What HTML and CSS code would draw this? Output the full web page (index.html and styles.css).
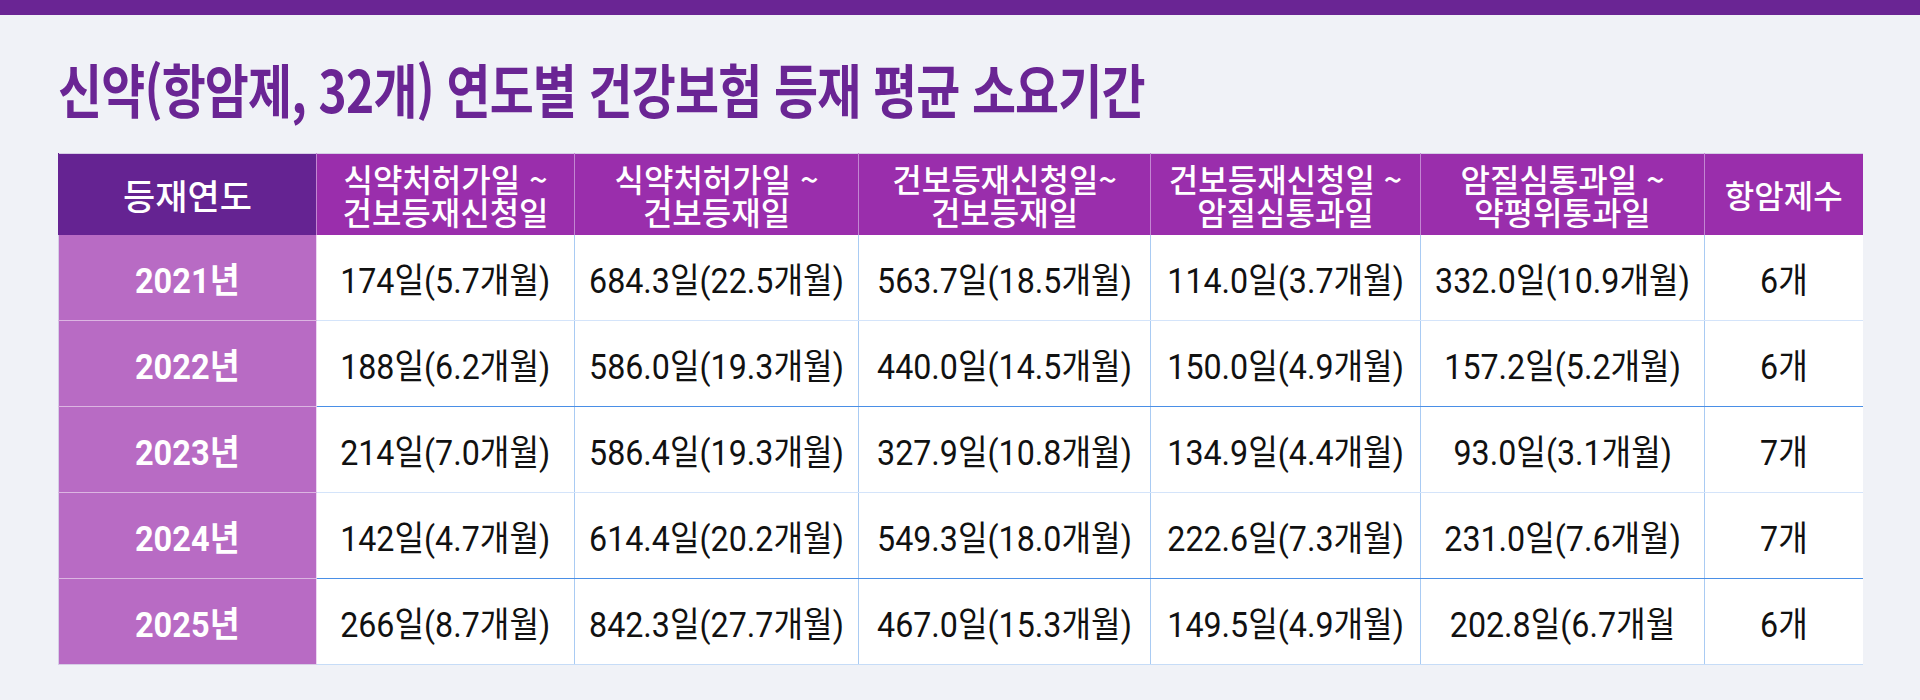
FILE: index.html
```html
<!DOCTYPE html>
<html lang="ko">
<head>
<meta charset="utf-8">
<title>신약 연도별 건강보험 등재 평균 소요기간</title>
<link rel="stylesheet" href="styles.css">
</head>
<body>
<div class="topbar"></div>
<main class="wrap">
  <h1 class="title"><span class="sq">신약(항암제, 32개) 연도별 건강보험 등재 평균 소요기간</span></h1>
  <table class="grid">
    <colgroup>
      <col class="c1"><col class="c2"><col class="c3"><col class="c4"><col class="c5"><col class="c6"><col class="c7">
    </colgroup>
    <thead>
      <tr>
        <th class="h-year"><span class="sq">등재연도</span></th>
        <th><span class="sq">식약처허가일 ~<br>건보등재신청일</span></th>
        <th><span class="sq">식약처허가일 ~<br>건보등재일</span></th>
        <th><span class="sq">건보등재신청일~<br>건보등재일</span></th>
        <th><span class="sq">건보등재신청일 ~<br>암질심통과일</span></th>
        <th><span class="sq">암질심통과일 ~<br>약평위통과일</span></th>
        <th><span class="sq">항암제수</span></th>
      </tr>
    </thead>
    <tbody>
      <tr>
        <th class="year"><span class="sq">2021년</span></th>
        <td><span class="sq">174일(5.7개월)</span></td>
        <td><span class="sq">684.3일(22.5개월)</span></td>
        <td><span class="sq">563.7일(18.5개월)</span></td>
        <td><span class="sq">114.0일(3.7개월)</span></td>
        <td><span class="sq">332.0일(10.9개월)</span></td>
        <td><span class="sq">6개</span></td>
      </tr>
      <tr>
        <th class="year"><span class="sq">2022년</span></th>
        <td><span class="sq">188일(6.2개월)</span></td>
        <td><span class="sq">586.0일(19.3개월)</span></td>
        <td><span class="sq">440.0일(14.5개월)</span></td>
        <td><span class="sq">150.0일(4.9개월)</span></td>
        <td><span class="sq">157.2일(5.2개월)</span></td>
        <td><span class="sq">6개</span></td>
      </tr>
      <tr>
        <th class="year"><span class="sq">2023년</span></th>
        <td><span class="sq">214일(7.0개월)</span></td>
        <td><span class="sq">586.4일(19.3개월)</span></td>
        <td><span class="sq">327.9일(10.8개월)</span></td>
        <td><span class="sq">134.9일(4.4개월)</span></td>
        <td><span class="sq">93.0일(3.1개월)</span></td>
        <td><span class="sq">7개</span></td>
      </tr>
      <tr>
        <th class="year"><span class="sq">2024년</span></th>
        <td><span class="sq">142일(4.7개월)</span></td>
        <td><span class="sq">614.4일(20.2개월)</span></td>
        <td><span class="sq">549.3일(18.0개월)</span></td>
        <td><span class="sq">222.6일(7.3개월)</span></td>
        <td><span class="sq">231.0일(7.6개월)</span></td>
        <td><span class="sq">7개</span></td>
      </tr>
      <tr>
        <th class="year"><span class="sq">2025년</span></th>
        <td><span class="sq">266일(8.7개월)</span></td>
        <td><span class="sq">842.3일(27.7개월)</span></td>
        <td><span class="sq">467.0일(15.3개월)</span></td>
        <td><span class="sq">149.5일(4.9개월)</span></td>
        <td><span class="sq">202.8일(6.7개월</span></td>
        <td><span class="sq">6개</span></td>
      </tr>
    </tbody>
  </table>
</main>
</body>
</html>
```

FILE: styles.css
```css
html, body {
  margin: 0;
  padding: 0;
}
body {
  background: #f0f2f7;
  font-family: Roboto, "Noto Sans CJK KR", sans-serif;
  color: #111;
  width: 1920px;
  height: 700px;
  overflow: hidden;
}
.topbar {
  height: 15px;
  background: #6a2594;
}
.wrap {
  padding: 0 58px;
}
.sq {
  display: inline-block;
  transform-origin: center;
  white-space: nowrap;
}
.title {
  margin: 0;
  padding-top: 41px;
  height: 138px;
  box-sizing: border-box;
  font-family: "Noto Sans CJK KR", sans-serif;
  font-size: 58px;
  font-weight: 700;
  line-height: 64px;
  color: #6a2594;
  letter-spacing: -1px;
}
.title .sq {
  transform: scaleX(0.825);
  transform-origin: left center;
}
.grid {
  width: 1804px;
  table-layout: fixed;
  border-collapse: collapse;
  border-top: 1px solid #d6cde6;
}
.c1 { width: 258px; }
.c2 { width: 258px; }
.c3 { width: 284px; }
.c4 { width: 292px; }
.c5 { width: 270px; }
.c6 { width: 284px; }
.c7 { width: 158px; }
thead th {
  height: 81px;
  padding: 0;
  background: #9a2eac;
  color: #fff;
  font-family: "Noto Sans CJK KR", sans-serif;
  font-weight: 500;
  font-size: 32px;
  line-height: 33px;
  text-align: center;
  vertical-align: middle;
  border-left: 1px solid #c386d2;
}
thead th.h-year {
  background: #652392;
  font-size: 35px;
  border-left: 1px solid #652392;
}
tbody td, tbody th {
  height: 85px;
  padding: 0;
  text-align: center;
  vertical-align: middle;
}
tbody td {
  background: #fff;
  font-size: 35px;
  font-weight: 400;
  color: #111;
  border-left: 1px solid #a9cbf3;
  border-bottom: 1px solid #d4e4fa;
}
tbody td .sq {
  transform: scaleX(0.92);
}
tbody tr:nth-child(2) td,
tbody tr:nth-child(4) td {
  border-bottom-color: #4a8fe6;
}
tbody tr:last-child td {
  border-bottom-color: #c6dcf7;
}
tbody th.year {
  background: #b86bc4;
  color: #fff;
  font-size: 35px;
  font-weight: 700;
  border-left: 1px solid #d6cde6;
  border-bottom: 1px solid #dcb5e2;
}
tbody th.year .sq {
  transform: scaleX(0.93);
}
tbody tr:last-child th.year {
  border-bottom-color: #d6cde6;
}
tbody tr td:nth-child(2) {
  border-left-color: #ecd6f2;
}
```
